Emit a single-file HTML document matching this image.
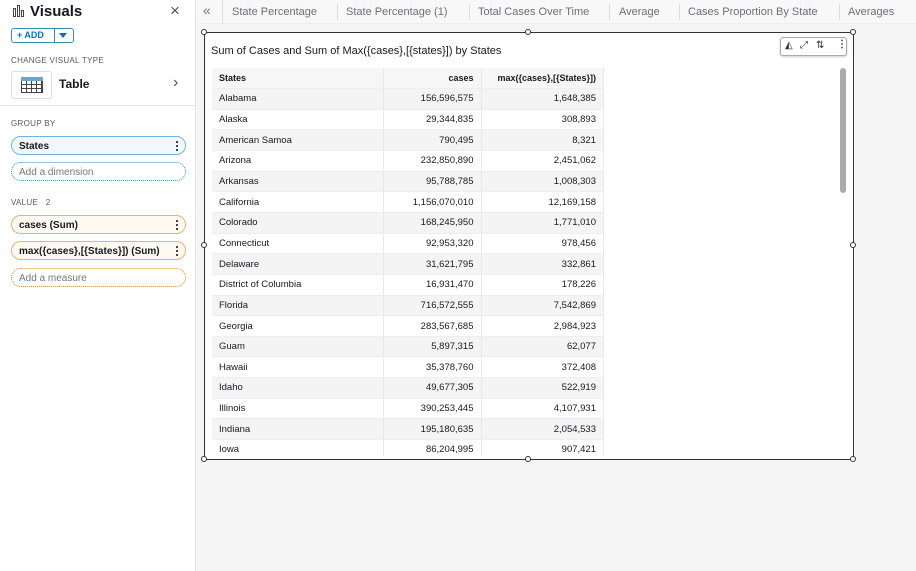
<!DOCTYPE html>
<html><head><style>
*{box-sizing:border-box;margin:0;padding:0}
body{width:916px;height:571px;overflow:hidden;background:#f5f5f5;font-family:"Liberation Sans",sans-serif;color:#16191f;position:relative}
.side{position:absolute;left:0;top:0;width:196px;height:571px;background:#fff;border-right:1px solid #e4e4e4}
.abs{position:absolute}
.lbl{font-size:8px;color:#545b64;letter-spacing:.3px}
.pill{position:absolute;left:11px;width:175px;height:19px;border-radius:10px;font-size:10px;padding:4px 7px 0;font-weight:bold}
.dots{position:absolute;right:7px;top:3px;width:2px;height:12px;background:radial-gradient(circle,#333 1px,transparent 1.2px) 0 0/2px 4px}
.tab{position:absolute;top:0;height:24px;font-size:11px;color:#687078;line-height:24px}
.sep{position:absolute;top:4px;width:1px;height:16px;background:#ddd}
.frame{position:absolute;left:204px;top:32px;width:650px;height:428px;background:#fff;border:1.5px solid #333}
.h{position:absolute;width:6px;height:6px;border:1px solid #333;border-radius:50%;background:#fff}
table{position:absolute;left:7px;top:35px;border-collapse:collapse;font-size:9.5px;width:392px}
td{height:20.65px;padding:0 7px;border-right:1px solid #e8e8e8;border-bottom:1px solid #eee;color:#16191f}
td.n{text-align:right}
tr:nth-child(even) td{background:#f4f4f4}
tr.hd td{font-weight:bold;font-size:9px;background:#f6f6f6}
</style></head><body>
<div class="side">
 <div class="abs" style="left:13px;top:5px;width:12px;height:12px">
  <div class="abs" style="left:0;top:3px;width:3px;height:9px;border:1px solid #444"></div>
  <div class="abs" style="left:4px;top:0;width:3px;height:12px;border:1px solid #444"></div>
  <div class="abs" style="left:8px;top:5px;width:3px;height:7px;border:1px solid #444"></div>
 </div>
 <div class="abs" style="left:30px;top:3px;font-size:15px;font-weight:bold">Visuals</div>
 <div class="abs" style="left:170px;top:1px;font-size:17px;color:#555">×</div>
 <div class="abs" style="left:11px;top:28px;width:63px;height:15px;border:1px solid #3d8ab5;border-radius:3px;font-size:9px;color:#0073bb;font-weight:bold">
  <span class="abs" style="left:5px;top:1px">+ ADD</span>
  <span class="abs" style="left:42px;top:0;height:13px;border-left:1px solid #3d8ab5"></span>
  <span class="abs" style="left:47px;top:4px;border:4px solid transparent;border-top:5px solid #0073bb"></span>
 </div>
 <div class="abs lbl" style="left:11px;top:56px">CHANGE VISUAL TYPE</div>
 <div class="abs" style="left:11px;top:71px;width:41px;height:28px;border:1px solid #ddd;border-radius:3px">
  <div class="abs" style="left:9px;top:5px;width:22px;height:16px;border:1px solid #444;background:repeating-linear-gradient(90deg,transparent 0 4px,#444 4px 5px),repeating-linear-gradient(0deg,transparent 0 3px,#444 3px 4px)"></div>
  <div class="abs" style="left:9px;top:5px;width:22px;height:4px;background:#6aa6cf"></div>
 </div>
 <div class="abs" style="left:59px;top:77px;font-size:12px;font-weight:bold">Table</div>
 <div class="abs" style="left:173px;top:74px;font-size:16px;color:#555">›</div>
 <div class="abs" style="left:0;top:105px;width:196px;height:1px;background:#e4e4e4"></div>
 <div class="abs lbl" style="left:11px;top:119px">GROUP BY</div>
 <div class="pill" style="top:136px;border:1px solid #74b3dd;background:#f1f8fd">States<div class="dots"></div></div>
 <div class="pill" style="top:162px;border:1px dotted #2e8bc9;font-weight:normal;color:#777">Add a dimension</div>
 <div class="abs lbl" style="left:11px;top:198px">VALUE&nbsp;&nbsp; 2</div>
 <div class="pill" style="top:215px;border:1px solid #e6b27a;background:#fff9f2">cases (Sum)<div class="dots"></div></div>
 <div class="pill" style="top:241px;border:1px solid #e6b27a;background:#fff9f2">max({cases},[{States}]) (Sum)<div class="dots"></div></div>
 <div class="pill" style="top:268px;border:1px dotted #e08a1e;font-weight:normal;color:#777">Add a measure</div>
</div>
<div class="abs" style="left:197px;top:0;width:719px;height:24px;background:#f8f8f8;border-bottom:1px solid #eee"></div>
<div class="tab" style="left:203px;font-size:14px;color:#777;top:-2px">«</div>
<div class="sep" style="left:222px;top:0;height:24px"></div>
<div class="tab" style="left:232px">State Percentage</div>
<div class="sep" style="left:337px"></div>
<div class="tab" style="left:346px">State Percentage (1)</div>
<div class="sep" style="left:469px"></div>
<div class="tab" style="left:478px">Total Cases Over Time</div>
<div class="sep" style="left:609px"></div>
<div class="tab" style="left:619px">Average</div>
<div class="sep" style="left:679px"></div>
<div class="tab" style="left:688px">Cases Proportion By State</div>
<div class="sep" style="left:839px"></div>
<div class="tab" style="left:848px">Averages</div>
<div class="frame">
 <div class="abs" style="left:6px;top:12px;font-size:11px">Sum of Cases and Sum of Max({cases},[{states}]) by States</div>
 <div class="abs" style="left:575px;top:4px;width:67px;height:19px;border:1px solid #aaa;border-radius:3px;background:#fff;box-shadow:0 1px 2px #ccc;font-size:10px;color:#333">
  <span class="abs" style="left:4px;top:2px">◭</span><span class="abs" style="left:19px;top:2px">⤢</span><span class="abs" style="left:35px;top:2px">⇅</span><span class="abs" style="left:56px;top:1px;font-weight:bold">⋮</span>
 </div>
 <div class="abs" style="left:635px;top:35px;width:6px;height:125px;background:#aaa;border-radius:3px"></div>
 <div class="abs" style="left:0;top:0;width:646px;height:423px;overflow:hidden">
 <table>
  <tr class="hd"><td style="width:171px">States</td><td class="n" style="width:98px">cases</td><td class="n">max({cases},[{States}])</td></tr>
  <tr><td>Alabama</td><td class="n">156,596,575</td><td class="n">1,648,385</td></tr>
  <tr><td>Alaska</td><td class="n">29,344,835</td><td class="n">308,893</td></tr>
  <tr><td>American Samoa</td><td class="n">790,495</td><td class="n">8,321</td></tr>
  <tr><td>Arizona</td><td class="n">232,850,890</td><td class="n">2,451,062</td></tr>
  <tr><td>Arkansas</td><td class="n">95,788,785</td><td class="n">1,008,303</td></tr>
  <tr><td>California</td><td class="n">1,156,070,010</td><td class="n">12,169,158</td></tr>
  <tr><td>Colorado</td><td class="n">168,245,950</td><td class="n">1,771,010</td></tr>
  <tr><td>Connecticut</td><td class="n">92,953,320</td><td class="n">978,456</td></tr>
  <tr><td>Delaware</td><td class="n">31,621,795</td><td class="n">332,861</td></tr>
  <tr><td>District of Columbia</td><td class="n">16,931,470</td><td class="n">178,226</td></tr>
  <tr><td>Florida</td><td class="n">716,572,555</td><td class="n">7,542,869</td></tr>
  <tr><td>Georgia</td><td class="n">283,567,685</td><td class="n">2,984,923</td></tr>
  <tr><td>Guam</td><td class="n">5,897,315</td><td class="n">62,077</td></tr>
  <tr><td>Hawaii</td><td class="n">35,378,760</td><td class="n">372,408</td></tr>
  <tr><td>Idaho</td><td class="n">49,677,305</td><td class="n">522,919</td></tr>
  <tr><td>Illinois</td><td class="n">390,253,445</td><td class="n">4,107,931</td></tr>
  <tr><td>Indiana</td><td class="n">195,180,635</td><td class="n">2,054,533</td></tr>
  <tr><td>Iowa</td><td class="n">86,204,995</td><td class="n">907,421</td></tr>
 </table>
 </div>
</div>
<div class="h" style="left:201px;top:29px"></div>
<div class="h" style="left:525px;top:29px"></div>
<div class="h" style="left:850px;top:29px"></div>
<div class="h" style="left:201px;top:242px"></div>
<div class="h" style="left:850px;top:242px"></div>
<div class="h" style="left:201px;top:456px"></div>
<div class="h" style="left:525px;top:456px"></div>
<div class="h" style="left:850px;top:456px"></div>
</body></html>
